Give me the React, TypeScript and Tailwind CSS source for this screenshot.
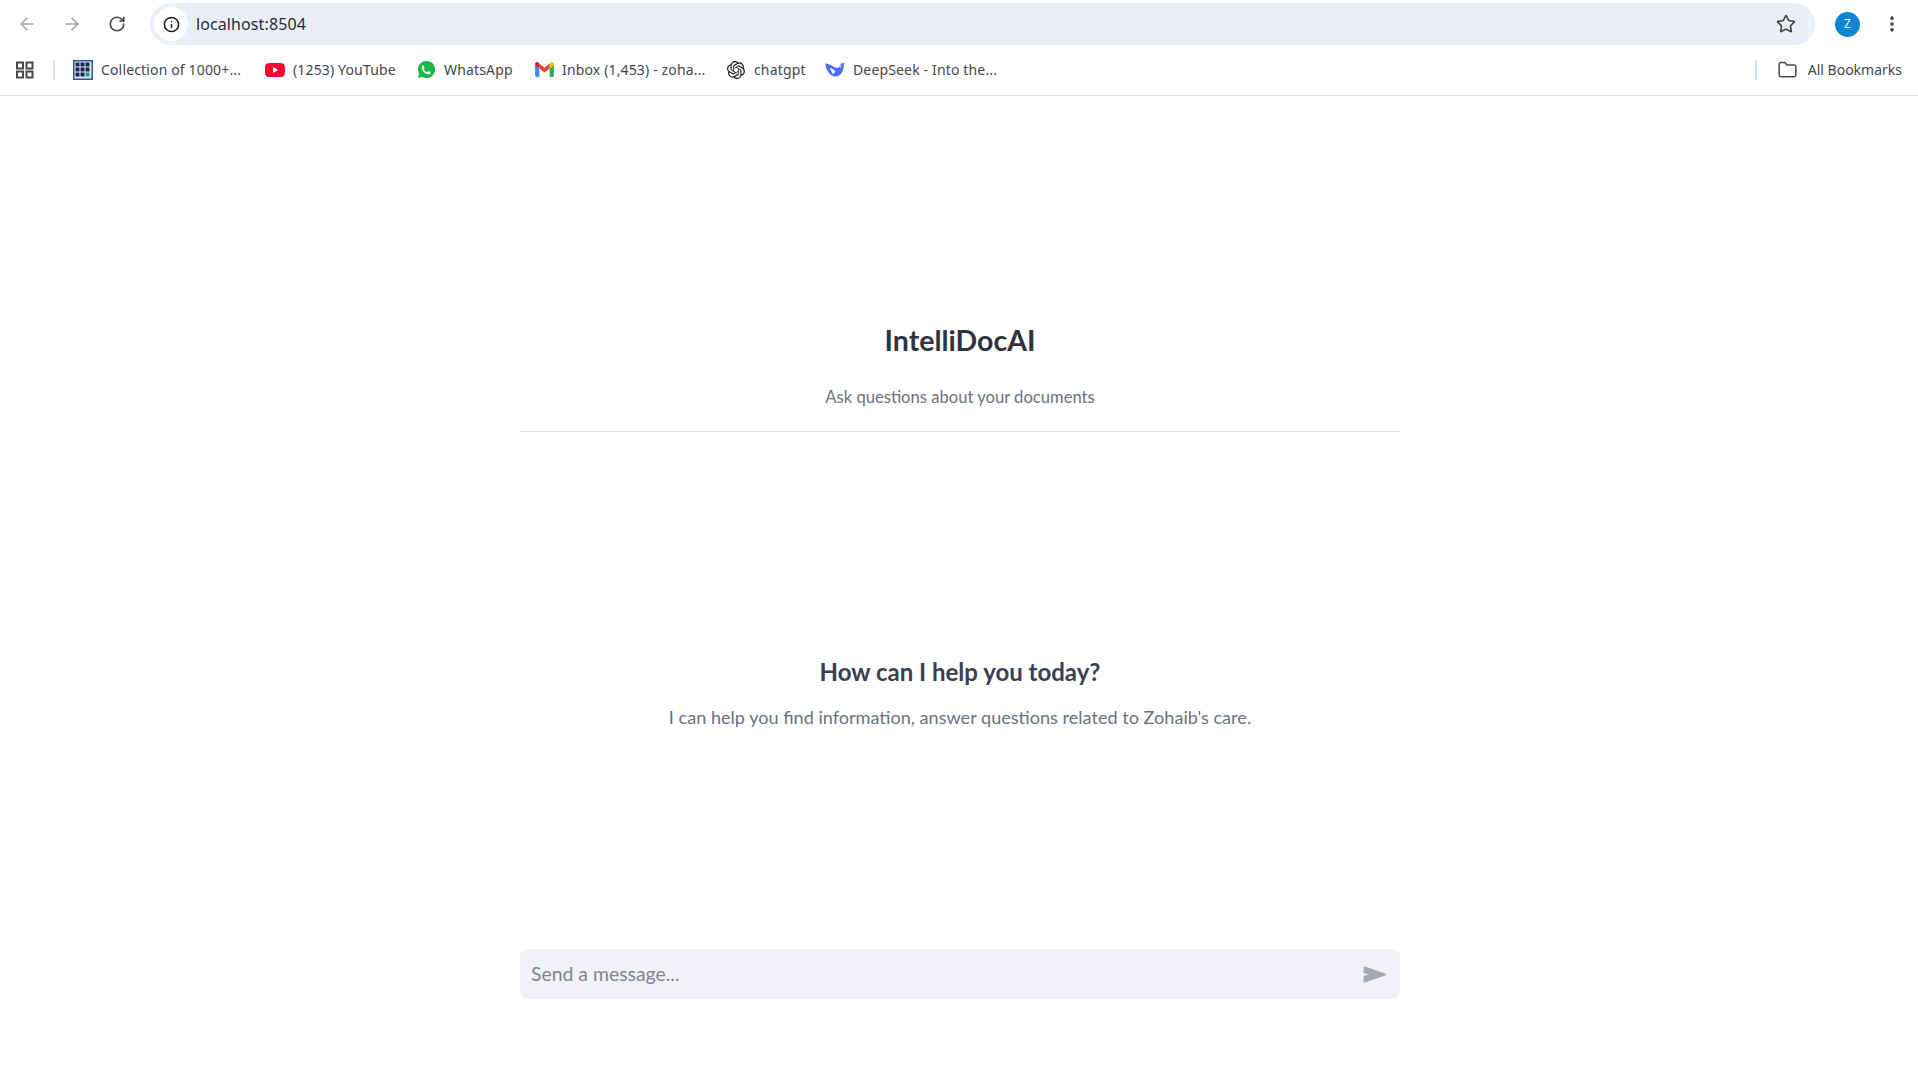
import { ArrowLeft, ArrowRight, RotateCw, Star, Info, EllipsisVertical, Folder } from "lucide-react";
import { SiOpenai, SiYoutube } from "react-icons/si";
import type { ReactNode } from "react";

function Bookmark({ icon, label, width }: { icon: ReactNode; label: string; width: string }) {
  return (
    <div className={`flex items-center gap-[8px] ${width}`}>
      <span className="flex h-5 w-5 shrink-0 items-center justify-center">{icon}</span>
      <span className="whitespace-nowrap text-[14px] tracking-[0.15px] text-[#45474a]">{label}</span>
    </div>
  );
}

function GridIcon() {
  return (
    <svg viewBox="0 0 20 20" className="h-5 w-5">
      <g fill="none" stroke="#47494c" strokeWidth="2">
        <rect x="2" y="2.500" width="6" height="6" />
        <rect x="11.500" y="2.500" width="6" height="6" />
        <rect x="2" y="11.500" width="6" height="6" />
        <rect x="11.500" y="11.500" width="6" height="6" />
      </g>
    </svg>
  );
}

function CollectionIcon() {
  return (
    <svg viewBox="0 0 20 20" className="h-5 w-5">
      <rect width="20" height="20" fill="#2f5597" />
      <rect x="1.500" y="1.500" width="17" height="17" fill="#dfe6f2" />
      {[2.500, 7.500, 12.500].map((x) =>
        [2.500, 7.500, 12.500].map((y) => (
          <rect key={`${x}-${y}`} x={x} y={y} width="4" height="4" fill={x === 12.500 && y === 12.500 ? "#1f9e8f" : "#14294f"} />
        )),
      )}
    </svg>
  );
}

function WhatsappIcon() {
  return (
    <svg viewBox="0 0 20 20" className="h-[19px] w-[19px]">
      <path d="M10 1a9 9 0 0 0-7.700 13.600L1 19l4.500-1.200A9 9 0 1 0 10 1z" fill="#19b84a" />
      <path
        d="M6.900 5.200c-.3 0-.7.100-1 .500-.5.600-1 1.400-1 2.500 0 1.200.8 2.500 1.900 3.800 1.500 1.700 3 2.600 4.900 3 1 .2 2-.4 2.500-1 .3-.5.300-1 .2-1.200l-2-1c-.3-.1-.5-.1-.7.200l-.7.800c-.2.200-.4.200-.6.100-1.400-.6-2.500-1.600-3.200-2.900-.1-.2-.1-.4.100-.6l.5-.6c.2-.2.200-.4.100-.6l-.8-2c-.1-.3-.2-.4-.5-.4z"
        fill="#fff"
      />
    </svg>
  );
}

function GmailIcon() {
  return (
    <svg viewBox="0 0 20 16" className="h-[15px] w-[19px]">
      <path d="M0 3v11.500A1.500 1.500 0 0 0 1.500 16H4.500V7L0 3z" fill="#4285f4" />
      <path d="M20 3v11.500a1.500 1.500 0 0 1-1.500 1.500H15.500V7L20 3z" fill="#34a853" />
      <path d="M15.500 1.500V7L20 3.500V2C20 .3 18 -.5 16.800 .5z" fill="#fbbc04" />
      <path d="M4.500 7V1.500L10 6l5.500-4.500V7L10 11.200z" fill="#ea4335" />
      <path d="M0 2v1.500L4.500 7V1.500L3.200 .5C2 -.5 0 .3 0 2z" fill="#c5221f" />
    </svg>
  );
}

function WhaleIcon() {
  return (
    <svg viewBox="0 0 24 20" className="h-[17px] w-5">
      <path
        d="M.500 3C2 2.500 5 4 8 5.500c3 1.500 6 3 8.500 2.500.8-2 1.800-3.800 3.500-4.500l-.5-2.500 2 1.700 2-.7-1 2.500c.3 5.500-2.500 12-8.500 13.800C7 19 .8 11 .500 3z"
        fill="#4d6bfe"
      />
      <path d="M6 8c2 .6 4.500 2 6.500 4.500l-2.500 3C8 13.500 6.500 11 6 8z" fill="#fff" />
      <circle cx="18.500" cy="6.500" r="1" fill="#fff" />
    </svg>
  );
}

export default function App() {
  return (
    <div className="flex h-[1065px] flex-col overflow-hidden bg-white font-['Noto_Sans',sans-serif]">
      <header className="h-[96px] shrink-0 border-b border-[#e3e3e3]">
        <div className="flex h-[47px] items-end pb-[2px]">
          <div className="flex h-[42px] w-[150px] shrink-0 items-center pl-[17px] text-[#a6a7a9]">
            <ArrowLeft className="h-5 w-5" strokeWidth={2} />
            <ArrowRight className="ml-[25px] h-5 w-5" strokeWidth={2} />
            <RotateCw className="ml-[26px] h-[18px] w-[18px] text-[#47494c]" strokeWidth={2.2} />
          </div>
          <div className="flex h-[42px] w-[1665px] shrink-0 items-center rounded-full bg-[#ebeff7] pl-[4px] pr-[19px]">
            <span className="flex h-[34px] w-[34px] items-center justify-center rounded-full bg-white">
              <Info className="h-[17px] w-[17px] text-[#1f1f1f]" strokeWidth={2.2} />
            </span>
            <span className="ml-[8px] text-[16px] tracking-[0.1px] text-[#2a2c30]">localhost:8504</span>
            <Star className="ml-auto h-[20px] w-[20px] text-[#47494c]" strokeWidth={2} />
          </div>
          <div className="flex h-[42px] flex-1 items-center pl-[20px]">
            <span className="flex h-[25px] w-[25px] items-center justify-center rounded-full bg-[#0c86d2] text-[12px] text-white">Z</span>
            <EllipsisVertical className="ml-[22px] h-5 w-5 text-[#47494c]" strokeWidth={2.4} />
          </div>
        </div>
        <div className="flex h-[45px] items-center pl-[15px] pr-[16px]">
          <GridIcon />
          <span className="ml-[18px] mr-[18px] h-[20px] w-[2px] bg-[#d3e3fd]" />
          <Bookmark width="w-[192px]" label="Collection of 1000+..." icon={<CollectionIcon />} />
          <Bookmark width="w-[151px]" label="(1253) YouTube" icon={<SiYoutube className="h-[20px] w-[20px] text-[#ff0033]" />} />
          <Bookmark width="w-[118px]" label="WhatsApp" icon={<WhatsappIcon />} />
          <Bookmark width="w-[192px]" label="Inbox (1,453) - zoha..." icon={<GmailIcon />} />
          <Bookmark width="w-[99px]" label="chatgpt" icon={<SiOpenai className="h-[18px] w-[18px] text-[#1f1f1f]" />} />
          <Bookmark width="w-[160px]" label="DeepSeek - Into the..." icon={<WhaleIcon />} />
          <span className="ml-auto mr-[20px] h-[20px] w-[2px] bg-[#d3e3fd]" />
          <Folder className="h-[20px] w-[21px] text-[#47494c]" strokeWidth={1.8} />
          <span className="ml-[10px] whitespace-nowrap text-[14px] text-[#45474a]">All Bookmarks</span>
        </div>
      </header>

      <main className="ml-[520px] flex w-[880px] flex-1 flex-col">
        <div className="mt-[224px] border-b border-[#e3e3e6] pb-[23px] text-center">
          <h1 className="text-[28.500px] leading-[40px] font-bold text-[#31333f] font-['Lato',sans-serif]">IntelliDocAI</h1>
          <p className="mt-[25px] mb-[-1px] text-[16.600px] leading-[24px] text-[#6b7280] font-['Lato',sans-serif]">Ask questions about your documents</p>
        </div>
        <div className="mt-[222px] text-center">
          <h2 className="text-[24px] leading-[36px] font-bold text-[#374151] font-['Lato',sans-serif]">How can I help you today?</h2>
          <p className="mt-[13px] text-[18.100px] leading-[28px] text-[#6b7280] font-['Lato',sans-serif]">I can help you find information, answer questions related to Zohaib's care.</p>
        </div>
        <div className="mt-[218px] flex h-[50px] items-center rounded-[8px] bg-[#f0f2f6] pl-[11px] pr-[13px]">
          <span className="text-[19.400px] text-[#808495] font-['Lato',sans-serif]">Send a message...</span>
          <svg viewBox="0 0 24 20" className="ml-auto h-[19px] w-[24px]">
            <path d="M1 2.500 22.500 10 1 17.500V12.300L10 10 1 7.700z" fill="#a3a8b8" stroke="#a3a8b8" strokeWidth="2" strokeLinejoin="round" />
          </svg>
        </div>
      </main>
    </div>
  );
}
